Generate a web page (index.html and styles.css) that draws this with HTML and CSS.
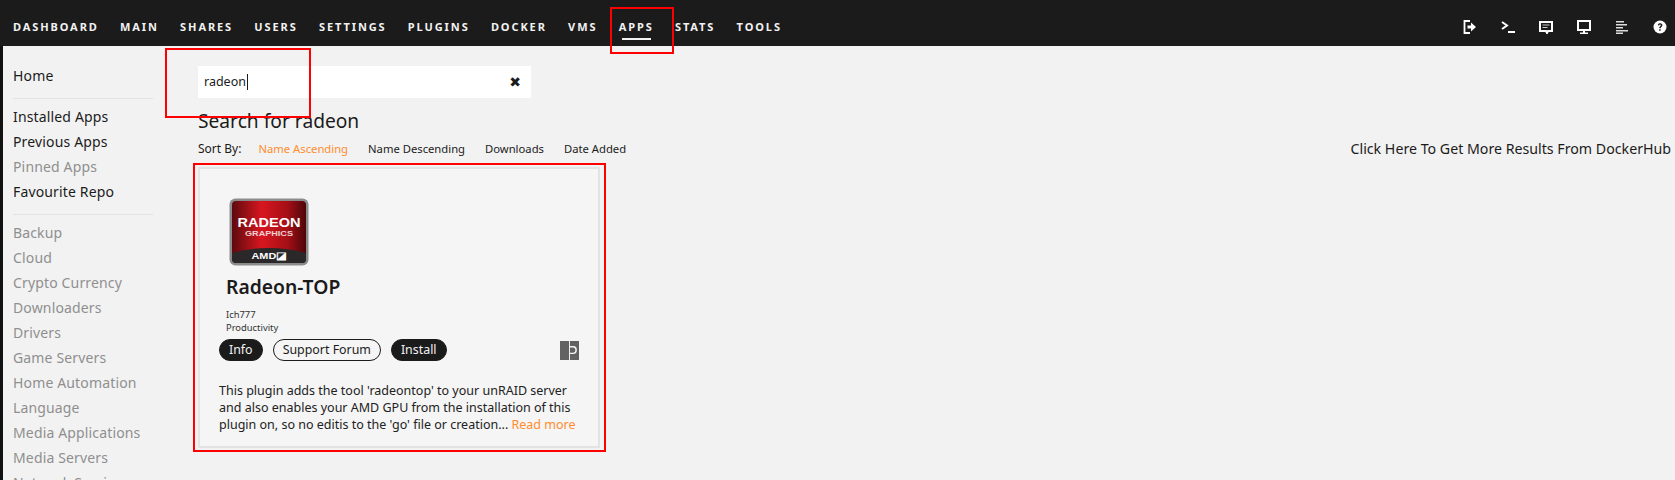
FILE: index.html
```html
<!DOCTYPE html>
<html lang="en">
<head>
<meta charset="utf-8">
<title>Apps</title>
<link rel="stylesheet" href="styles.css">
</head>
<body>
<div class="nav">
	<ul class="tabs">
		<li>Dashboard</li>
		<li>Main</li>
		<li>Shares</li>
		<li>Users</li>
		<li>Settings</li>
		<li>Plugins</li>
		<li>Docker</li>
		<li>VMs</li>
		<li class="active">Apps</li>
		<li>Stats</li>
		<li>Tools</li>
	</ul>
	<div class="tools">
		<svg viewBox="0 0 14 14"><path d="M7 1H1.500v12H7" fill="none" stroke="#fff" stroke-width="1.800"/><path d="M4.500 5.500H8V2.500L13 7l-5 4.500V8.500H4.500z" fill="#fff"/></svg>
		<svg viewBox="0 0 14 14"><path d="M1 2l5 3.500-5 3.500" fill="none" stroke="#fff" stroke-width="2"/><path d="M7 11h7v2H7z" fill="#fff"/></svg>
		<svg viewBox="0 0 14 14"><path d="M1 2h12v9H9l-1 2-1-2H1z" fill="none" stroke="#fff" stroke-width="2"/><path d="M3.500 4.500h7v1h-7zM3.500 7h5v1h-5z" fill="#ccc"/></svg>
		<svg viewBox="0 0 14 14"><path d="M1 1h12v9H1z" fill="none" stroke="#fff" stroke-width="2"/><path d="M6 11h2v1.500H6zM3 12.500h8V14H3z" fill="#fff"/></svg>
		<svg viewBox="0 0 14 14"><path d="M1 1h8v1.500H1zM1 4h11v1.500H1zM1 7h7v1.500H1zM1 10h12v1.500H1zM1 12.500h7V14H1z" fill="#ddd"/></svg>
		<svg viewBox="0 0 14 14"><circle cx="7" cy="7" r="6.500" fill="#fff"/><path d="M4.800 5.200C5 3.800 6 3.200 7.100 3.200c1.300 0 2.300.8 2.300 2 0 1.700-1.700 1.600-1.700 3H6.200c0-2 1.600-2 1.600-3 0-.4-.3-.7-.8-.7-.5 0-.8.3-.9.9zM6.200 9.200h1.500v1.500H6.200z" fill="#1c1b1b"/></svg>
	</div>
</div>

<div class="page">
	<div class="edge"></div>
	<div class="side">
		<p class="link">Home</p>
		<hr>
		<p class="link">Installed Apps</p>
		<p class="link">Previous Apps</p>
		<p class="link off">Pinned Apps</p>
		<p class="link">Favourite Repo</p>
		<hr>
		<p class="link off">Backup</p>
		<p class="link off">Cloud</p>
		<p class="link off">Crypto Currency</p>
		<p class="link off">Downloaders</p>
		<p class="link off">Drivers</p>
		<p class="link off">Game Servers</p>
		<p class="link off">Home Automation</p>
		<p class="link off">Language</p>
		<p class="link off">Media Applications</p>
		<p class="link off">Media Servers</p>
		<p class="link off">Network Services</p>
	</div>

	<div class="main">
		<div class="search">
			<span>radeon</span><i class="caret"></i>
			<b class="clear">✖</b>
		</div>
		<h2>Search for radeon</h2>
		<div class="sort">
			<span class="sort-label">Sort By:</span>
			<span class="on">Name Ascending</span>
			<span>Name Descending</span>
			<span>Downloads</span>
			<span>Date Added</span>
			<span class="more">Click Here To Get More Results From DockerHub</span>
		</div>

		<div class="card">
			<div class="head">
				<svg class="logo" viewBox="0 0 80 68">
					<defs>
						<linearGradient id="red" x1="0" x2="1" y1="0" y2="0">
							<stop offset="0" stop-color="#5c0a0e"/>
							<stop offset=".4" stop-color="#d8161f"/>
							<stop offset=".75" stop-color="#a50f16"/>
							<stop offset="1" stop-color="#4c0609"/>
						</linearGradient>
					</defs>
					<rect x="0.500" y="0.500" width="79" height="67" rx="6" fill="#8b8b8b"/>
					<rect x="3" y="3" width="74" height="62" rx="4" fill="url(#red)"/>
					<path d="M3 55q37-10 74 0v6q0 4-4 4H7q-4 0-4-4z" fill="#2a2829"/>
					<text x="40" y="29" class="logo-a" textLength="63" lengthAdjust="spacingAndGlyphs">RADEON</text>
					<text x="40" y="38" class="logo-b" textLength="48" lengthAdjust="spacingAndGlyphs">GRAPHICS</text>
					<text x="40" y="60.500" class="logo-c" textLength="35" lengthAdjust="spacingAndGlyphs">AMD◪</text>
				</svg>
				<h3>Radeon-TOP</h3>
				<p class="small">Ich777</p>
				<p class="small">Productivity</p>
			</div>
			<div class="actions">
				<span class="btn dark">Info</span>
				<span class="btn">Support Forum</span>
				<span class="btn dark">Install</span>
				<svg class="type" viewBox="0 0 20 20"><path d="M0 0h20v20H0z" fill="#626262"/><path d="M9.500 0h1v20h-1z" fill="#f5f5f5"/><path d="M10 6h4q3 0 3 3.500T14 13h-4" fill="none" stroke="#f5f5f5" stroke-width="1.500"/></svg>
			</div>
			<p class="desc">This plugin adds the tool 'radeontop' to your unRAID server and also enables your AMD GPU from the installation of this plugin on, so no editis to the 'go' file or creation... <span class="read">Read more</span></p>
		</div>
	</div>
</div>

<div class="mark mark-apps"></div>
<div class="mark mark-search"></div>
<div class="mark mark-card"></div>
</body>
</html>
```

FILE: styles.css
```css
*{margin:0; padding:0; box-sizing:border-box;}
html,body{height:480px; overflow:hidden;}
body{background:#f2f2f2; color:#1c1b1b; font-family:"Noto Sans",sans-serif; font-size:14px; position:relative;}

.nav{height:46px; background:#1c1b1b; display:flex; justify-content:space-between; align-items:center; padding:7px 8px 0 13px;}
.tabs{display:flex; gap:21.300px; list-style:none;}
.tabs li{color:#f2f2f2; font-size:11px; font-weight:700; letter-spacing:1.900px; text-transform:uppercase; line-height:14px; position:relative;}
.tabs .active::after{content:""; position:absolute; left:3px; right:3px; top:18px; height:2px; background:#f2f2f2;}
.tools{display:flex; gap:24px;}
.tools svg{width:14px; height:14px; display:block;}

.page{display:flex; height:434px; overflow:hidden;}
.edge{width:3px; background:#111; flex:none;}
.side{width:150px; flex:none; margin-left:10px; padding-top:17px;}
.side hr{border:0; border-top:1px solid #e3e3e3; margin:10px 10px 5px 0;}
.link{height:25px; line-height:25px; font-size:14px; letter-spacing:.15px; color:#1c1b1b;}
.off{color:#8f8f8f;}

.main{flex:1; padding:20px 4px 0 35px;}
.search{width:333px; height:32px; background:#fff; display:flex; align-items:center; padding:0 10px 1px 6px; font-size:12.500px;}
.caret{width:1px; height:16px; background:#1c1b1b; margin-left:1px;}
.clear{margin-left:auto; font-size:14px; font-family:"DejaVu Sans",sans-serif;}
h2{font-size:19.200px; font-weight:400; line-height:28px; margin-top:9px;}
.sort{display:flex; align-items:center; gap:20px; font-size:11.250px; height:20px; margin-top:3px;}
.sort-label{font-size:12px; margin-right:-3px;}
.sort .on{color:#ff8c2f;}
.sort .more{margin-left:auto; font-size:14.200px;}

.card{width:402px; height:281px; margin-top:9px; background:#f5f5f5; border:2px solid #e3e3e3; padding:29px 19px 0 19px;}
.head{padding-left:7px;}
.logo{width:80px; height:68px; display:block; margin-left:3px;}
.logo text{text-anchor:middle; fill:#fff; font-family:"Liberation Sans",sans-serif; font-weight:700;}
.logo-a{font-size:13px;}
.logo-b{font-size:7px; opacity:.8;}
.logo-c{font-size:9.500px;}
h3{font-size:19.300px; font-weight:600; line-height:28px; margin-top:7px;}
.small{font-size:9.400px; line-height:13px; color:#333;}
.small:first-of-type{margin-top:7px;}
.actions{display:flex; align-items:center; gap:10px; margin-top:5px;}
.btn{height:22px; line-height:20px; padding:0 9px; border:1px solid #1c1b1b; border-radius:11px; font-size:12.400px;}
.dark{background:#1c1b1b; color:#f2f2f2;}
.type{width:19px; height:19px; margin-left:auto; display:block;}
.desc{font-size:12.500px; line-height:17px; margin-top:21px; color:#222;}
.read{color:#ff8c2f;}

/* red boxes drawn over the screenshot */
.mark{position:absolute; border:2px solid #f00;}
.mark-apps{left:610px; top:7px; width:64px; height:47px;}
.mark-search{left:165px; top:48px; width:146px; height:70px;}
.mark-card{left:193px; top:163px; width:413px; height:289px;}
```
